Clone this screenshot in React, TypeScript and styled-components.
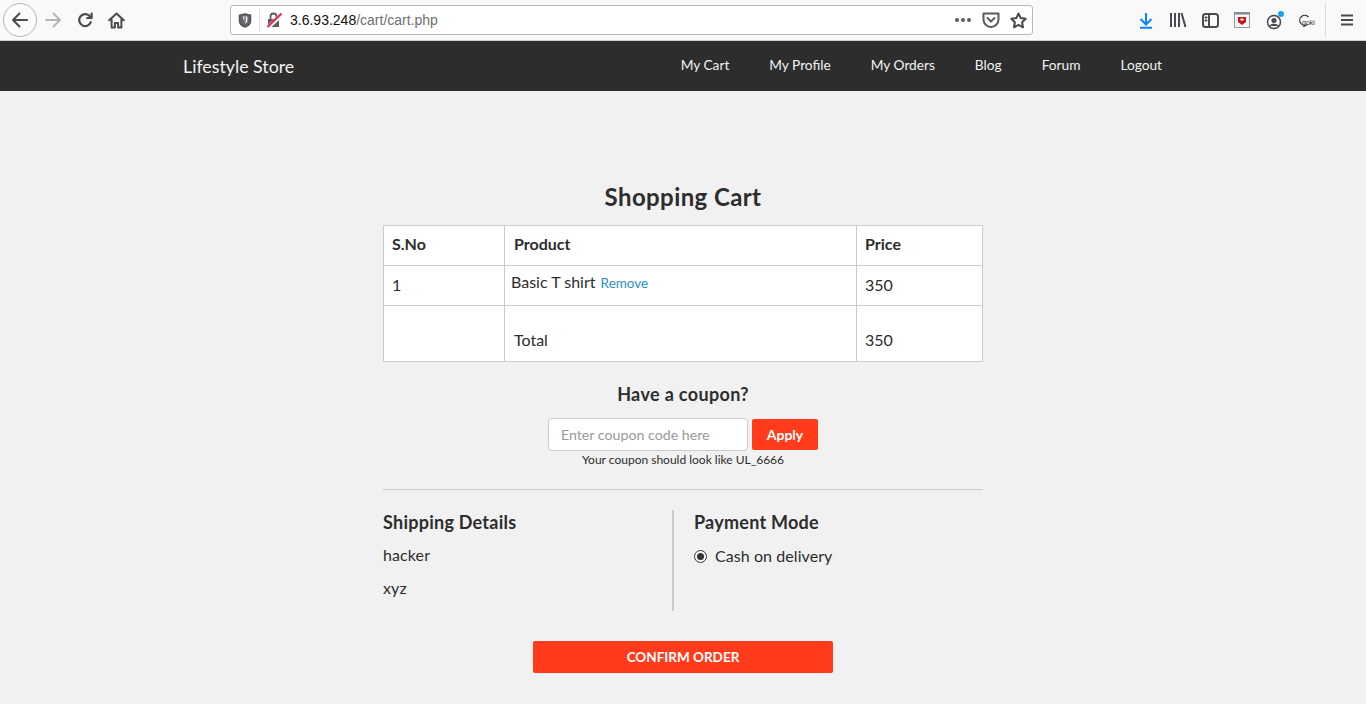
import React from "react";
import styled, { createGlobalStyle } from "styled-components";

const Global = createGlobalStyle`
  html, body { margin: 0; padding: 0; background: #f1f1f1; }
  body { font-family: "Lato", "Liberation Sans", sans-serif; color: #2d2d2d; height: 704px; overflow: hidden; }
  * { box-sizing: border-box; }
`;

const Chrome = styled.div`
  height: 41px; background: #f9f9fa; border-bottom: 1px solid #cfcfd1;
  display: flex; align-items: center; padding-left: 3px;
`;
const BackCircle = styled.div`
  width: 34px; height: 34px; border-radius: 50%; border: 1px solid #b5b5b7; background: #fbfbfb;
  display: flex; align-items: center; justify-content: center; flex: none;
`;
const NavIcons = styled.div`
  display: flex; align-items: center; gap: 15px; margin-left: 7px; width: 190px; flex: none;
`;
const Ico = styled.svg`
  display: block; flex: none;
`;
const GhostIco = styled(Ico)`
  margin-left: -2px;
`;
const MenuIco = styled(Ico)`
  margin-left: -1px;
`;
const UrlBar = styled.div`
  width: 803px; height: 30px; flex: none; background: #fff; border: 1px solid #b9b9bb; border-radius: 3px;
  display: flex; align-items: center; padding-left: 7px; font: 14px "Liberation Sans", Arial, sans-serif; margin-left: -4px;
`;
const UrlSep = styled.div`
  width: 1px; height: 24px; background: #e4e4e6; margin: 0 7px 0 7px;
`;
const Host = styled.span`
  color: #111; margin-left: 8px;
`;
const UrlPath = styled.span`
  color: #6f6f72; flex: 1;
`;
const UrlEnd = styled.div`
  display: flex; align-items: center; gap: 10px; padding-right: 5px;
`;
const Tools = styled.div`
  display: flex; align-items: center; flex: 1; height: 100%; padding-left: 105px; gap: 15px;
`;
const ToolSep = styled.div`
  width: 1px; height: 34px; background: #dcdcde; margin-left: -8px;
`;
const GhostWord = styled.text`
  font: 7px "Liberation Sans", Arial, sans-serif; fill: #333;
`;

const Navbar = styled.nav`
  height: 50px; background: #2d2d2d; display: flex; align-items: center; padding: 0 204px 0 183px; color: #fff;
`;
const Brand = styled.div`
  font-size: 17.8px; flex: 1; color: #f3f3f3; margin-top: -1px;
`;
const NavLinks = styled.div`
  display: flex; gap: 40px; font-size: 13.7px; color: #f3f3f3; margin-top: -3px;
`;

const Main = styled.main`
  width: 600px; margin-left: 383px; padding-top: 92px;
`;
const Title = styled.h1`
  font-size: 24px; font-weight: 700; letter-spacing: .4px; line-height: 28px; text-align: center; margin: 0 0 14px; color: #2d2d2d;
`;
const Table = styled.table`
  width: 599px; border-collapse: collapse; background: #fff; table-layout: fixed; font-size: 16px;
`;
const Th = styled.th<{ $w: number }>`
  width: ${p => p.$w}px; height: 40px; border: 1px solid #ccc; padding: 0 8px 4px; text-align: left; font-weight: 700; font-size: 16px;
  &:nth-child(2) { padding-left: 9px; }
`;
const Td = styled.td<{ $tall?: boolean }>`
  height: ${p => (p.$tall ? 56 : 40)}px; border: 1px solid #ccc; padding: ${p => (p.$tall ? "12px 8px 0" : "0 8px 3px")};
  &:nth-child(2) { padding-left: 9px; }
`;
const ProductCell = styled.div`
  margin: -5px 0 0 -3px;
`;
const Remove = styled.a`
  color: #2a8fc7; font-size: 13.5px; margin-left: 1px;
`;
const CouponHead = styled.h3`
  font-size: 18px; font-weight: 700; letter-spacing: .35px; line-height: 22px; text-align: center; margin: 21px 0 13px;
`;
const CouponRow = styled.div`
  display: flex; justify-content: center; align-items: center; gap: 4px;
`;
const CouponInput = styled.input`
  width: 200px; height: 33px; border: 1px solid #ccc; border-radius: 4px; padding: 0 12px; background: #fff;
  font: 14.2px "Lato", sans-serif; outline: none;
  &::placeholder { color: #999; opacity: 1; }
`;
const ApplyBtn = styled.button`
  width: 66px; height: 31px; border: none; border-radius: 2px; background: #ff3b1c; color: #fff;
  font: 700 14px "Lato", sans-serif; padding: 0;
`;
const Hint = styled.div`
  font-size: 12px; line-height: 14px; text-align: center; margin-top: 2px;
`;
const Rule = styled.hr`
  border: none; border-top: 1px solid #ccc; margin: 22px 0 20px;
`;
const Columns = styled.div`
  display: flex; height: 101px;
`;
const ShipCol = styled.div`
  width: 291px; border-right: 2px solid #ccc; flex: none;
`;
const PayCol = styled.div`
  padding-left: 20px; flex: 1;
`;
const SectionHead = styled.h3`
  font-size: 18px; font-weight: 700; letter-spacing: .25px; line-height: 24px; margin: 0 0 10px;
`;
const Line = styled.p`
  font-size: 16px; letter-spacing: .1px; line-height: 22px; margin: 0 0 11px;
`;
const RadioRow = styled.label`
  display: flex; align-items: center; gap: 8px; font-size: 16px; letter-spacing: .07px; line-height: 22px; margin-top: 11px;
`;
const RadioDot = styled.span`
  width: 13px; height: 13px; border-radius: 50%; border: 1px solid #333; display: flex; align-items: center; justify-content: center; background: #f8f8f8;
  &::after { content: ""; width: 7px; height: 7px; border-radius: 50%; background: #333; }
`;
const Confirm = styled.button`
  display: block; width: 300px; height: 32px; margin: 30px auto 0; background: #ff3b1c; color: #fff; border: none; border-radius: 2px;
  font: 700 13.5px "Lato", sans-serif; padding: 0;
`;

const G = { fill: "none", stroke: "#4a4a4f", strokeWidth: 2, strokeLinecap: "round" as const, strokeLinejoin: "round" as const };

export default function App() {
  return (
    <>
      <Global />
      <Chrome>
        <BackCircle>
          <Ico width="18" height="18" viewBox="0 0 18 18" {...G}><path d="M16 9H2M8.5 2.5 2 9l6.5 6.5" /></Ico>
        </BackCircle>
        <NavIcons>
          <Ico width="18" height="18" viewBox="0 0 18 18" {...G} stroke="#b4b4b6"><path d="M2 9h14M9.5 2.5 16 9l-6.5 6.5" /></Ico>
          <Ico width="16" height="16" viewBox="0 0 16 16" {...G} strokeWidth="2.2"><path d="M13.8 10.2A6 6 0 1 1 12.2 3.6L14 6" /><path d="M14.6 1.6V6H10.2" /></Ico>
          <Ico width="17" height="17" viewBox="0 0 17 17" {...G} strokeWidth="2"><path d="M1.2 8.3 8.5 1.5l7.3 6.8M3.6 7v8.5h3.3v-4.5h3.2v4.5h3.3V7" /></Ico>
        </NavIcons>
        <UrlBar>
          <Ico width="14" height="15" viewBox="0 0 14 15">
            <path d="M1.5 2.2 7 1l5.5 1.2V8c0 3-2.5 5-5.5 6-3-1-5.5-3-5.5-6z" fill="#66666a" stroke="#56565a" strokeWidth="1.6" strokeLinejoin="round" />
            <path d="M4.6 3.6h4.8v4.2c0 1.4-1 2.4-2.4 3z" fill="#f4f4f4" />
            <path d="M7 3.8v6.6" stroke="#66666a" strokeWidth="1.4" />
          </Ico>
          <UrlSep />
          <Ico width="15" height="16" viewBox="0 0 15 16">
            <path d="M1 7h11v8H1z" fill="#5c5c61" />
            <path d="M3.5 7V4.5a3 3 0 0 1 6 0V7" fill="none" stroke="#5c5c61" strokeWidth="1.8" />
            <path d="M0 16.5 15 2.5" stroke="#fff" strokeWidth="4" />
            <path d="M.5 15 14.5 1.5" stroke="#f0224e" strokeWidth="2" />
          </Ico>
          <Host>3.6.93.248</Host>
          <UrlPath>/cart/cart.php</UrlPath>
          <UrlEnd>
            <Ico width="18" height="6" viewBox="0 0 18 6" fill="#5a5a5f"><circle cx="3" cy="3" r="2" /><circle cx="9" cy="3" r="2" /><circle cx="15" cy="3" r="2" /></Ico>
            <Ico width="18" height="16" viewBox="0 0 18 16" {...G} stroke="#5a5a5f"><path d="M1.5 1.5h15v6a7.5 7.5 0 0 1-15 0z" /><path d="M5.5 6 9 9.5 12.5 6" /></Ico>
            <Ico width="17" height="17" viewBox="0 0 17 17" {...G} stroke="#4a4a4f"><path d="m8.5 1.5 2.2 4.6 5 .7-3.6 3.5.9 5-4.5-2.4L4 15.3l.9-5L1.3 6.8l5-.7z" /></Ico>
          </UrlEnd>
        </UrlBar>
        <Tools>
          <Ico width="16" height="17" viewBox="0 0 16 17" fill="none" stroke="#0a84ff" strokeWidth="2"><path d="M8 1v11M2.5 7 8 12.5 13.5 7M2 15.8h12" /></Ico>
          <Ico width="18" height="16" viewBox="0 0 18 16" fill="none" stroke="#4a4a4f" strokeWidth="2"><path d="M2 1v14M6 1v14M10 1v14M12.5 1l4 14" /></Ico>
          <Ico width="17" height="15" viewBox="0 0 17 15" {...G}><rect x="1" y="1" width="15" height="13" rx="2.5" /><path d="M7 1v13M3.5 4.5h1M3.5 7.5h1" /></Ico>
          <Ico width="16" height="16" viewBox="0 0 16 16"><rect x=".5" y=".5" width="15" height="15" fill="#f4f4f4" stroke="#9a9a9e" /><rect x=".5" y=".5" width="15" height="2" fill="#7c8790" /><path d="M4 5h8v5l-4 3-4-3z" fill="#c01818" /><path d="M6.5 6.5h3v2h-3z" fill="#fff" /></Ico>
          <Ico width="20" height="19" viewBox="0 0 20 19">
            <circle cx="9" cy="11" r="6.5" fill="none" stroke="#4a4a4f" strokeWidth="1.5" />
            <circle cx="9" cy="9.5" r="2.5" fill="#4a4a4f" /><path d="M4.5 15c1-3 8-3 9 0" fill="#4a4a4f" />
            <circle cx="16" cy="3" r="3" fill="#0ea5ea" />
          </Ico>
          <GhostIco width="20" height="14" viewBox="0 0 20 14">
            <path d="M9.5 11.5A5 5 0 1 1 10.5 4" fill="none" stroke="#333" strokeWidth="1.2" />
            <GhostWord x="4" y="12">goki</GhostWord>
          </GhostIco>
          <ToolSep />
          <MenuIco width="14" height="12" viewBox="0 0 14 12" fill="none" stroke="#4a4a4f" strokeWidth="2"><path d="M1 1.5h12M1 6h12M1 10.5h12" /></MenuIco>
        </Tools>
      </Chrome>
      <Navbar>
        <Brand>Lifestyle Store</Brand>
        <NavLinks>
          <span>My Cart</span><span>My Profile</span><span>My Orders</span><span>Blog</span><span>Forum</span><span>Logout</span>
        </NavLinks>
      </Navbar>
      <Main>
        <Title>Shopping Cart</Title>
        <Table>
          <thead>
            <tr><Th $w={121}>S.No</Th><Th $w={352}>Product</Th><Th $w={126}>Price</Th></tr>
          </thead>
          <tbody>
            <tr>
              <Td>1</Td>
              <Td><ProductCell>Basic T shirt <Remove>Remove</Remove></ProductCell></Td>
              <Td>350</Td>
            </tr>
            <tr>
              <Td $tall />
              <Td $tall>Total</Td>
              <Td $tall>350</Td>
            </tr>
          </tbody>
        </Table>
        <CouponHead>Have a coupon?</CouponHead>
        <CouponRow>
          <CouponInput placeholder="Enter coupon code here" />
          <ApplyBtn>Apply</ApplyBtn>
        </CouponRow>
        <Hint>Your coupon should look like UL_6666</Hint>
        <Rule />
        <Columns>
          <ShipCol>
            <SectionHead>Shipping Details</SectionHead>
            <Line>hacker</Line>
            <Line>xyz</Line>
          </ShipCol>
          <PayCol>
            <SectionHead>Payment Mode</SectionHead>
            <RadioRow><RadioDot />Cash on delivery</RadioRow>
          </PayCol>
        </Columns>
        <Confirm>CONFIRM ORDER</Confirm>
      </Main>
    </>
  );
}
